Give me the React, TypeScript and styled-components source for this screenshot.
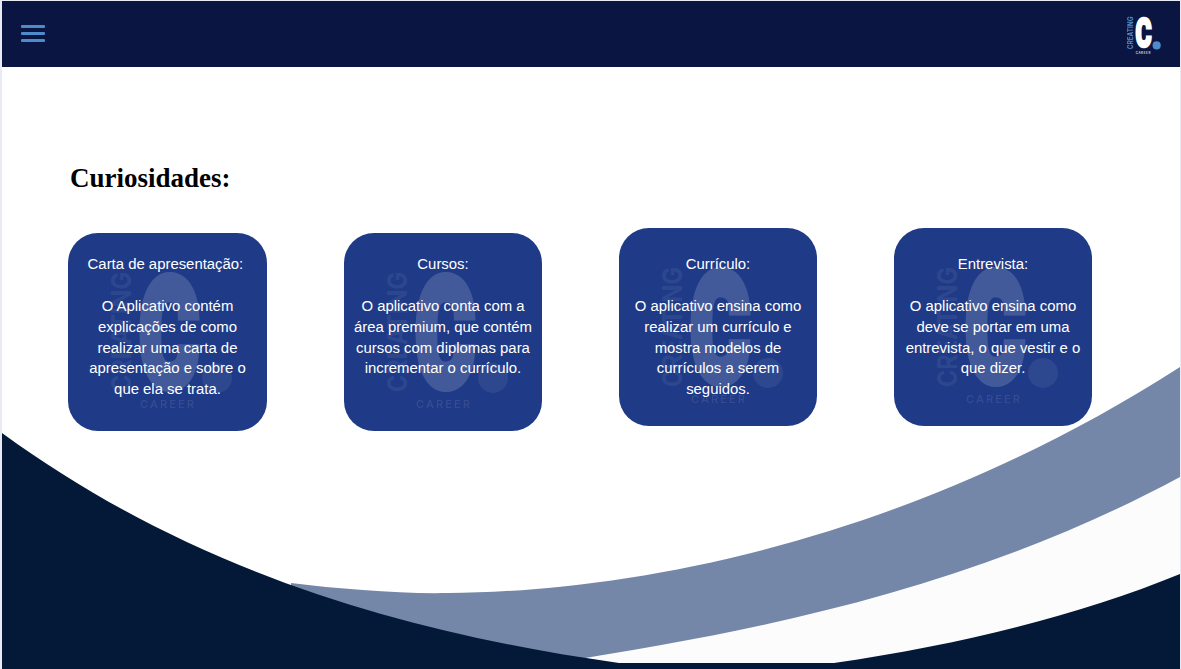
import React from "react";
import styled, { createGlobalStyle } from "styled-components";

const Global = createGlobalStyle`
  html, body { margin: 0; padding: 0; background: #e9ebf2; }
  body { width: 1181px; height: 669px; overflow: hidden; }
`;

const Frame = styled.div`
  position: relative;
  width: 1181px;
  height: 669px;
  box-sizing: border-box;
  padding: 1px 1px 0 2px;
  overflow: hidden;
`;

const Surface = styled.div`
  height: 100%;
  background: #ffffff;
  display: flex;
  flex-direction: column;
`;

const Waves = styled.svg`
  position: absolute;
  left: 0;
  top: 0;
  width: 1181px;
  height: 669px;
`;

const Header = styled.header`
  position: relative;
  height: 66px;
  flex: none;
  background: #0a1641;
  display: flex;
  align-items: center;
  justify-content: space-between;
  padding: 0 19px;
`;

const Burger = styled.div`
  display: flex;
  flex-direction: column;
  gap: 4px;
  width: 24px;
  margin-bottom: 1px;
`;

const BurgerBar = styled.span`
  display: block;
  height: 3px;
  border-radius: 1px;
  background: #4d8bcb;
`;

const Main = styled.main`
  position: relative;
  padding: 91px 0 0 66px;
`;

const Title = styled.h1`
  margin: 0 0 35px 2px;
  font-family: "Liberation Serif", serif;
  font-size: 27px;
  line-height: 40px;
  font-weight: 700;
  color: #000;
`;

const CardRow = styled.div`
  display: flex;
  gap: 77px;
  align-items: flex-start;
`;

const Card = styled.article<{ $raised?: boolean }>`
  position: relative;
  width: 198px;
  height: 198px;
  flex: none;
  box-sizing: border-box;
  margin-top: ${(p) => (p.$raised ? "-5px" : "0")};
  padding: ${(p) => (p.$raised ? "26px" : "21px")} 8px 0;
  border-radius: 30px;
  background: #1f3b87;
  overflow: hidden;

  &:first-child {
    width: 199px;
  }
`;

const CardText = styled.div`
  position: relative;
  font-family: "Liberation Sans", Arial, sans-serif;
  font-size: 14.9px;
  line-height: 20.7px;
  color: #fff;
  text-align: center;
`;

const CardTitle = styled.div`
  margin-bottom: 21.4px;
`;

const CardBody = styled.p`
  margin: 0;
`;

const WatermarkSlot = styled.div`
  position: absolute;
  left: 40px;
  top: 30px;
`;

const HeaderLogo = styled.div`
  display: flex;
`;

const LogoSvg = styled.svg`
  display: block;
`;

const LogoBig = styled.text<{ $mark?: boolean }>`
  font-family: Roboto, "Liberation Sans", sans-serif;
  font-weight: 900;
  font-size: 150px;
  fill: #ffffff;
  stroke: #ffffff;
  stroke-width: 10px;
  opacity: ${(p) => (p.$mark ? 0.16 : 1)};
`;

const LogoSide = styled.text<{ $mark?: boolean }>`
  font-family: Inter, "Liberation Sans", sans-serif;
  font-weight: 700;
  font-size: 27.5px;
  fill: ${(p) => (p.$mark ? "rgba(255,255,255,0.08)" : "#4d8bcb")};
`;

const LogoSub = styled.text<{ $mark?: boolean }>`
  font-family: Inter, "Liberation Sans", sans-serif;
  font-weight: 500;
  font-size: 11px;
  fill: ${(p) => (p.$mark ? "rgba(255,255,255,0.11)" : "#ffffff")};
`;

const LogoDot = styled.circle<{ $mark?: boolean }>`
  fill: ${(p) => (p.$mark ? "rgba(255,255,255,0.07)" : "#4d8bcb")};
`;

function Logo({ mark, width, height }: { mark?: boolean; width: number; height: number }) {
  return (
    <LogoSvg viewBox="40 30 125 150" width={width} height={height}>
      <LogoSide
        $mark={mark}
        transform="translate(63 159) rotate(-90)"
        textLength={120}
        lengthAdjust="spacingAndGlyphs"
      >
        CREATING
      </LogoSide>
      <LogoBig $mark={mark} transform="translate(71.4 152.5) scale(0.6 1)">
        C
      </LogoBig>
      <LogoDot $mark={mark} cx={149} cy={145} r={15} />
      <LogoSub $mark={mark} x={72} y={175} textLength={54}>
        CAREER
      </LogoSub>
    </LogoSvg>
  );
}

const cards = [
  {
    title: "Carta de apresentação:\u00a0",
    body: "O Aplicativo contém explicações de como realizar uma carta de apresentação e sobre o que ela se trata.",
    raised: false,
  },
  {
    title: "Cursos:",
    body: "O aplicativo conta com a área premium, que contém cursos com diplomas para incrementar o currículo.",
    raised: false,
  },
  {
    title: "Currículo:",
    body: "O aplicativo ensina como realizar um currículo e mostra modelos de currículos a serem seguidos.",
    raised: true,
  },
  {
    title: "Entrevista:",
    body: "O aplicativo ensina como deve se portar em uma entrevista, o que vestir e o que dizer.",
    raised: true,
  },
];

export default function App() {
  return (
    <Frame>
      <Global />
      <Surface>
        <Header>
          <Burger>
            <BurgerBar />
            <BurgerBar />
            <BurgerBar />
          </Burger>
          <HeaderLogo>
            <Logo width={34} height={41} />
          </HeaderLogo>
        </Header>
        <Main>
          <Title>Curiosidades:</Title>
          <CardRow>
            {cards.map((c) => (
              <Card key={c.title} $raised={c.raised}>
                <WatermarkSlot>
                  <Logo mark width={125} height={150} />
                </WatermarkSlot>
                <CardText>
                  <CardTitle>{c.title}</CardTitle>
                  <CardBody>{c.body}</CardBody>
                </CardText>
              </Card>
            ))}
          </CardRow>
        </Main>
      </Surface>
      <Waves viewBox="0 0 1181 669">
        <path d="M1180 477 C970 590 760 630 560 662 L560 669 L1180 669 Z" fill="#fcfcfc" />
        <path
          d="M291 583 C340 589 400 594 448 593 C620 592 900 547 1180 367 L1180 477 C970 590 760 630 560 662 L291 669 Z"
          fill="#7587a8"
        />
        <path
          d="M2 433 C190 570 400 632 619 663 L834 663 C960 645 1080 615 1180 574 L1180 669 L2 669 Z"
          fill="#041838"
        />
      </Waves>
    </Frame>
  );
}
